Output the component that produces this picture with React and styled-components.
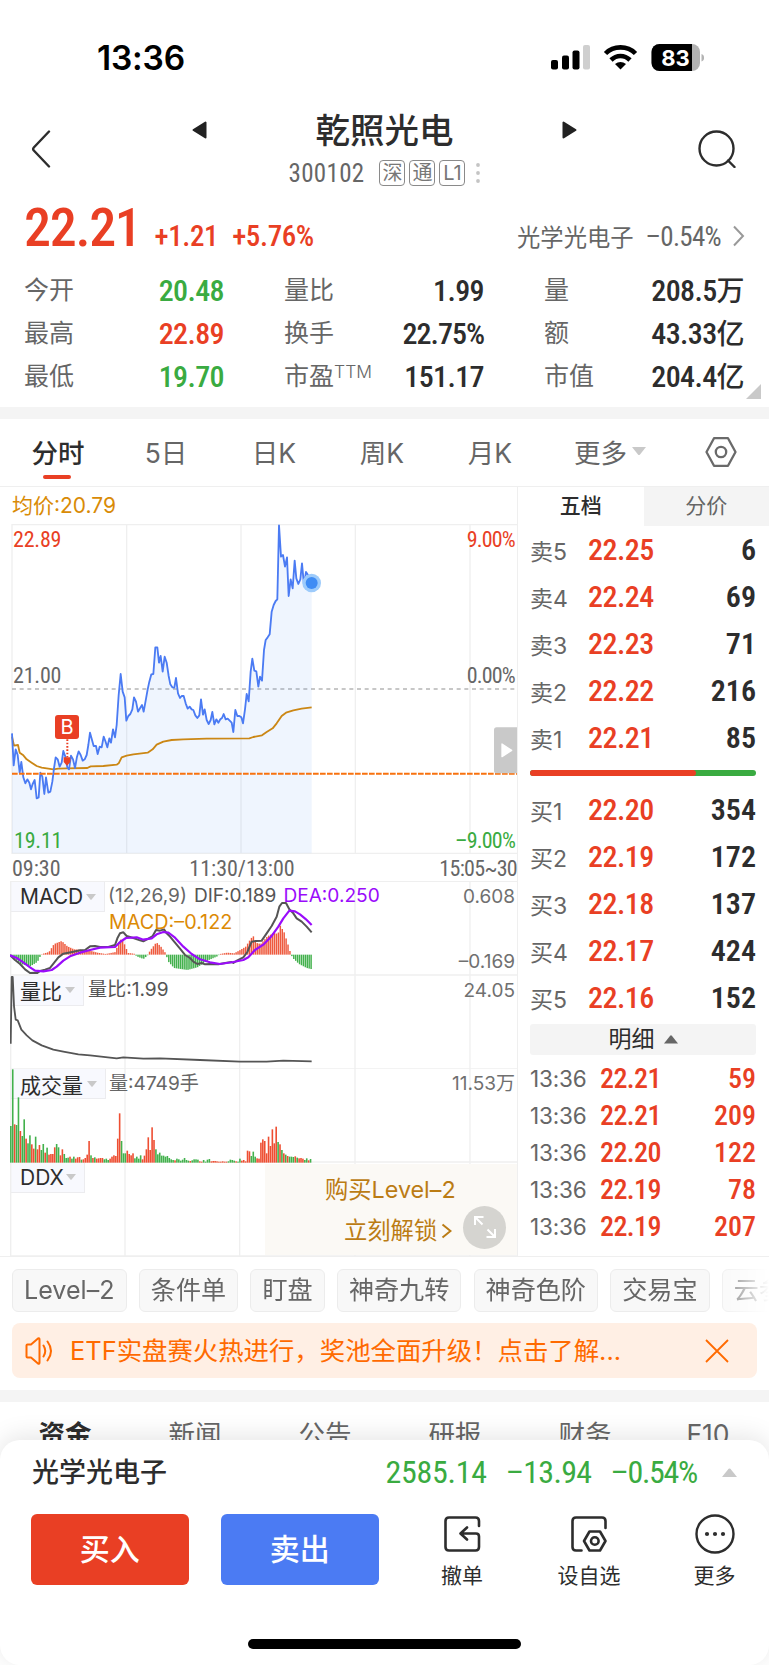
import styled, { createGlobalStyle } from "styled-components";

const RED = "#e93f24";
const GREEN = "#3aab41";
const BLUE = "#4b7bf3";
const DARK = "#2d2d2d";
const GREY = "#666666";
const LINE = "#efefef";
const TEXT_FONT = `Inter, "Noto Sans CJK SC", sans-serif`;
const NUM_FONT = `"Roboto Condensed", Roboto, "Noto Sans CJK SC", sans-serif`;

const stats = [
  { label: "今开", value: "20.48", color: GREEN },
  { label: "量比", value: "1.99" },
  { label: "量", value: "208.5", unit: "万" },
  { label: "最高", value: "22.89", color: RED },
  { label: "换手", value: "22.75%" },
  { label: "额", value: "43.33", unit: "亿" },
  { label: "最低", value: "19.70", color: GREEN },
  { label: "市盈", sup: "TTM", value: "151.17" },
  { label: "市值", value: "204.4", unit: "亿" },
];

const periods = ["分时", "5日", "日K", "周K", "月K"];

const asks = [
  ["卖5", "22.25", "6"],
  ["卖4", "22.24", "69"],
  ["卖3", "22.23", "71"],
  ["卖2", "22.22", "216"],
  ["卖1", "22.21", "85"],
];

const bids = [
  ["买1", "22.20", "354"],
  ["买2", "22.19", "172"],
  ["买3", "22.18", "137"],
  ["买4", "22.17", "424"],
  ["买5", "22.16", "152"],
];

const ticks = [
  ["13:36", "22.21", "59"],
  ["13:36", "22.21", "209"],
  ["13:36", "22.20", "122"],
  ["13:36", "22.19", "78"],
  ["13:36", "22.19", "207"],
];

const tools = ["Level–2", "条件单", "盯盘", "神奇九转", "神奇色阶", "交易宝", "云参"];
const infoTabs = ["资金", "新闻", "公告", "研报", "财务", "F10"];

// chart units are a third of a pixel, one minute is about 5.77 units wide
const STEP = 5.77;
const CHART_END = 935;

const priceLine =
  "36,280 41,376 47,328 53,345 59,398 64,366 70,412 76,430 82,418 88,428 93,448 98,432 104,420 110,475 116,472 121,398 127,410 133,462 138,412 145,458 151,455 157,425 162,385 167,352 173,358 179,380 185,368 190,333 196,350 202,382 207,388 213,347 219,358 225,384 231,350 236,334 242,345 248,362 254,358 260,345 265,315 270,278 276,300 281,318 288,318 293,342 299,320 305,322 311,290 316,303 322,322 328,295 333,308 339,268 345,292 350,255 356,165 362,102 368,155 374,172 379,242 385,228 391,222 397,208 402,172 408,185 414,215 420,205 426,195 431,215 437,182 443,148 448,125 454,103 460,102 466,22 472,22 477,68 482,48 488,95 494,50 500,68 506,108 511,133 517,142 523,143 528,114 534,160 540,174 545,168 551,168 557,190 563,206 569,200 575,208 580,210 586,226 592,234 598,226 603,178 609,224 614,208 620,240 626,252 632,240 637,216 643,253 649,238 655,248 661,238 666,234 671,222 677,238 683,236 689,242 695,248 700,276 706,210 712,228 718,228 724,232 729,250 735,208 740,162 746,184 752,95 757,56 763,92 769,94 775,140 780,110 786,122 792,30 797,0 803,-8 809,-17 815,-85 821,-105 827,-117 832,-122 837,-344 843,-250 849,-255 855,-220 861,-248 866,-132 872,-182 878,-155 884,-238 889,-185 895,-168 901,-182 906,-230 912,-164 918,-204 924,-195 929,-178 935,-170";
const avgLine =
  "36,290 42,317 54,315 59,338 70,346 80,358 95,368 110,378 125,383 145,386 160,388 175,386 200,385 262,384 272,379 310,378 350,374 356,370 365,352 380,347 400,343 443,338 458,328 470,314 490,305 515,300 550,298 620,296 748,295 760,291 786,286 800,276 818,265 830,250 845,228 858,218 880,211 905,206 935,202";
const difLine =
  "30,255 45,270 60,282 75,298 90,309 105,308 112,309 120,303 135,299 150,294 162,279 175,262 190,251 205,248 220,245 240,241 255,240 270,229 285,228 300,231 325,231 345,225 352,205 360,190 370,187 380,198 400,204 420,211 430,214 445,206 458,198 468,180 480,182 492,178 500,190 510,200 525,218 540,236 555,255 570,264 580,275 592,282 605,279 615,283 630,282 655,283 680,278 695,276 700,279 712,271 730,262 742,246 755,215 768,213 785,212 800,190 815,168 830,140 838,110 846,99 858,99 868,118 880,130 890,145 905,155 920,170 935,187";
const deaLine =
  "30,256 50,264 70,277 90,292 105,302 130,304 155,300 170,290 190,272 210,259 240,248 270,240 300,233 345,231 360,216 378,204 410,202 430,209 455,205 470,193 490,186 505,188 525,203 550,230 575,252 600,268 630,277 660,282 700,276 730,270 745,262 765,240 790,224 815,198 835,170 850,145 868,122 885,124 900,133 918,148 935,165";
const ratioLine =
  "32,520 35,320 38,320 42,408 47,448 53,450 64,478 80,495 97,510 125,525 160,538 190,544 235,552 270,555 350,564 370,561 430,565 480,564 600,569 720,574 800,574 850,571 935,573";

const macdShape = [
  [30, 0], [45, -14], [60, -28], [88, -35], [110, -22], [118, -6], [124, 2], [145, 8], [160, 32], [183, 41],
  [200, 25], [220, 16], [250, 14], [268, 12], [290, 6], [315, 2], [345, 8], [352, 34], [362, 48], [372, 30],
  [382, 5], [400, 3], [408, -5], [428, -13], [440, -3], [448, 12], [467, 37], [480, 25], [495, 4], [502, -20],
  [520, -40], [560, -46], [590, -38], [620, -18], [650, -5], [658, 2], [680, 6], [700, 4], [715, 12], [735, 24],
  [745, 40], [757, 57], [768, 35], [780, 32], [800, 55], [820, 65], [832, 62], [838, 88], [850, 68], [862, 30],
  [870, 3], [876, -10], [895, -28], [918, -40], [935, -44],
];

// negative values are falling minutes
const volumes = [
  -110, -280, 115, -113, -196, 95, -80, -130, 72, -58, -82, 55, 42, -78, 40, 53, -38, -56, 30, -45, 24, 26, 26, 46,
  -56, -46, 22, 40, -26, -14, -15, 18, -12, -18, 12, 16, 17, -9, 10, 14, 24, 65, -22, 14, -16, 12, 13, 14, 14, -10,
  -12, -8, 12, 18, 22, 20, 72, 148, -65, -28, -28, 36, 26, 22, 28, -13, -18, -12, -22, 10, 21, 40, 76, 38, 106, 68,
  -40, -25, -30, -21, -21, -18, -20, -14, -10, -8, 7, -12, -10, -6, -9, -14, -8, -6, 5, -7, -10, -10, -9, 4, 3, -8,
  -3, -9, -11, 4, 5, 5, 4, 3, 3, 4, 3, 3, -4, -9, -8, -6, 4, -3, -12, 6, 8, 4, 36, 34, -20, -33, -18, 13, 12, 60,
  70, 65, 28, 78, 50, 100, 58, 108, -62, 55, -38, 28, -24, 20, -18, -18, -17, 19, -15, 13, 14, 12, -8, -13, 7, -11,
];
const VOLUME_STEP = (CHART_END - 30) / volumes.length;

function macdAt(x) {
  const i = macdShape.findIndex((p) => p[0] >= x);
  if (i < 1) return i === 0 ? 0 : -44;
  const [x0, y0] = macdShape[i - 1];
  const [x1, y1] = macdShape[i];
  return y0 + ((y1 - y0) * (x - x0)) / (x1 - x0);
}

function PriceChart() {
  return (
    <ChartSvg viewBox="30 -348 1521 990" width="507" height="330">
      <g stroke={LINE} strokeWidth="4">
        <path d="M36-348V642M380-348V642M723-348V642M1066-348V642M1410-348V642" />
        <path d="M36-346H1551M36 640H1551" />
      </g>
      <path d="M36 147H1551" stroke="#b5b5b5" strokeWidth="4" strokeDasharray="12 11" />
      <polygon points={`${priceLine} 935,640 36,640`} fill="#4b93f3" fillOpacity="0.09" />
      <polyline points={avgLine} fill="none" stroke="#cb8715" strokeWidth="5.5" strokeLinejoin="round" />
      <polyline points={priceLine} fill="none" stroke={BLUE} strokeWidth="5.5" strokeLinejoin="round" />
      <path d="M36 401H1551" stroke="#f8720f" strokeWidth="6" strokeDasharray="17 4" />
      <circle cx="935" cy="-171" r="28" fill="#9dcbfb" />
      <circle cx="935" cy="-171" r="18" fill="#3f8cf4" />
      <path d="M202 298V352" stroke={RED} strokeWidth="6" strokeDasharray="5 5" />
      <path d="M191 352H211V366L201 377L191 366Z" fill={RED} />
      <path d="M1551 262H1490Q1482 262 1482 270V392Q1482 400 1490 400H1551Z" fill="#c9c9c9" />
      <path d="M1506 312L1535 331L1506 350Z" fill="#fff" stroke="#fff" strokeWidth="4" strokeLinejoin="round" />
    </ChartSvg>
  );
}

function PanelGrid({ top }) {
  return (
    <g stroke={LINE} strokeWidth="4">
      {[32, 375, 719, 1065, 1410].map((x) => (
        <path key={x} d={`M${x} ${top}v281`} />
      ))}
      <path d={`M30 ${top + 279}H1551`} />
    </g>
  );
}

function MacdChart() {
  const bars = [];
  for (let x = 31; x < CHART_END - 2; x += STEP) bars.push([x, macdAt(x)]);
  return (
    <ChartSvg viewBox="30 36 1521 281" width="507" height="93.67">
      <PanelGrid top={36} />
      {bars.map(([x, h]) => (
        <rect key={x} x={x} y={h > 0 ? 254 - h : 254} width="4.4" height={Math.abs(h)} fill={h > 0 ? "#ee5a3e" : "#42b14c"} />
      ))}
      <polyline points={difLine} fill="none" stroke="#555" strokeWidth="6" strokeLinejoin="round" />
      <polyline points={deaLine} fill="none" stroke="#9a0cfb" strokeWidth="6.5" strokeLinejoin="round" />
    </ChartSvg>
  );
}

function RatioChart() {
  return (
    <ChartSvg viewBox="30 317 1521 281" width="507" height="93.67">
      <PanelGrid top={317} />
      <polyline points={ratioLine} fill="none" stroke="#555" strokeWidth="5.5" strokeLinejoin="round" />
    </ChartSvg>
  );
}

function VolumeChart() {
  return (
    <ChartSvg viewBox="30 12 1521 281" width="507" height="93.67">
      <PanelGrid top={12} />
      {volumes.map((v, i) => (
        <rect key={i} x={30 + i * VOLUME_STEP} y={293 - Math.abs(v)} width="4.8" height={Math.abs(v)} fill={v > 0 ? "#ee4e32" : "#42b14c"} />
      ))}
    </ChartSvg>
  );
}

function Caret({ color = "#c9c9c9", up, size = 10 }) {
  return (
    <svg width={size} height={size * 0.6} viewBox="0 0 10 6">
      <path d={up ? "M0 6L4.4.5Q5 0 5.6.5L10 6Z" : "M0 0H10L5.6 5.5Q5 6 4.4 5.5Z"} fill={color} />
    </svg>
  );
}

function StatusIcons() {
  return (
    <svg width="154" height="28" viewBox="550 44 154 28">
      <rect x="551" y="60" width="7" height="9.5" rx="2" />
      <rect x="562" y="55.5" width="7" height="14" rx="2" />
      <rect x="572.5" y="50.5" width="7" height="19" rx="2" />
      <rect x="583" y="45" width="7" height="24.5" rx="2" fill="#cfcfcf" />
      <g fill="none" stroke="#000" strokeWidth="4.6">
        <path d="M605.5 53.5C613.5 45.3 627.5 45.3 635.5 53.5" />
        <path d="M611 60C616.5 54.6 624.5 54.6 630 60" />
      </g>
      <path d="M615 64C618.5 61.2 622.5 61.2 626 64L620.5 69.5Z" />
      <clipPath id="charge">
        <rect x="651.5" y="44" width="48.5" height="27" rx="8" />
      </clipPath>
      <g clipPath="url(#charge)">
        <rect x="651" y="44" width="49" height="27" fill="#b3b3b3" />
        <rect x="651" y="44" width="41" height="27" />
      </g>
      <path d="M701.5 54C705 55 705 60.5 701.5 61.5Z" fill="#b3b3b3" />
      <text x="675.5" y="65.5" textAnchor="middle" fontFamily="Inter" fontSize="22" fontWeight="700" fill="#fff">83</text>
    </svg>
  );
}

function Book({ rows }) {
  return rows.map(([name, price, qty]) => (
    <BookRow key={name}>
      <span>{name}</span>
      <Num $size={30} $weight={500} $color={RED} $space={-0.5}>{price}</Num>
      <Num $size={30} $weight={600} $color={DARK}>{qty}</Num>
    </BookRow>
  ));
}

export default function App() {
  return (
    <Screen>
      <GlobalStyle />
      <StatusBar>
        <span>13:36</span>
        <StatusIcons />
      </StatusBar>

      <Header>
        <svg width="20" height="38" viewBox="0 0 20 38">
          <path d="M18 1.5L2.8 17.5Q1.5 19 2.8 20.5L18 36.5" fill="none" stroke={DARK} strokeWidth="2.4" strokeLinecap="round" />
        </svg>
        <SwitchArrow viewBox="0 0 15 18">
          <path d="M13.5 1.5V16.5L1.5 9Z" fill="#222" stroke="#222" strokeWidth="2" strokeLinejoin="round" />
        </SwitchArrow>
        <TitleBlock>
          <h1>乾照光电</h1>
          <CodeRow>
            <Num $size={25} $color={GREY} $space={0.3}>300102</Num>
            <Tags>
              <Tag>深</Tag>
              <Tag>通</Tag>
              <Tag>L1</Tag>
            </Tags>
            <svg width="4" height="22" viewBox="0 0 4 22" fill="#c4c4c4">
              <circle cx="2" cy="3" r="1.9" />
              <circle cx="2" cy="11" r="1.9" />
              <circle cx="2" cy="19" r="1.9" />
            </svg>
          </CodeRow>
        </TitleBlock>
        <SwitchArrow viewBox="0 0 15 18">
          <path d="M1.5 1.5V16.5L13.5 9Z" fill="#222" stroke="#222" strokeWidth="2" strokeLinejoin="round" />
        </SwitchArrow>
        <SearchIcon viewBox="0 0 38 38" fill="none" stroke={DARK} strokeWidth="2.4" strokeLinecap="round">
          <circle cx="18.5" cy="18.5" r="17" />
          <path d="M30 30.5L36.5 37" />
        </SearchIcon>
      </Header>

      <Quote>
        <Num $size={54} $weight={500} $color={RED} $space={-1.3}>22.21</Num>
        <Change>
          <Num $size={29} $weight={500} $color={RED} $space={-0.4}>+1.21</Num>
          <Num $size={29} $weight={500} $color={RED} $space={-0.4}>+5.76%</Num>
        </Change>
        <Sector>
          <span>光学光电子</span>
          <Num $size={27} $color={GREY} $space={-0.7}>–0.54%</Num>
          <svg width="13" height="22" viewBox="0 0 13 22">
            <path d="M2 1.5L11 11L2 20.5" fill="none" stroke="#999" strokeWidth="2" />
          </svg>
        </Sector>
      </Quote>

      <Stats>
        {stats.map((s) => (
          <Stat key={s.label}>
            <StatLabel>
              {s.label}
              {s.sup && <sup>{s.sup}</sup>}
            </StatLabel>
            <Num $size={30} $weight={500} $color={s.color || DARK} $space={s.value.endsWith("%") ? -1 : -0.6}>
              {s.value}
              {s.unit && <Unit>{s.unit}</Unit>}
            </Num>
          </Stat>
        ))}
        <Corner />
      </Stats>
      <Band $height={12} />

      <Periods>
        {periods.map((p, i) => (
          <Period key={p} $active={i === 0}>{p}</Period>
        ))}
        <Period $width={132}>
          更多
          <Caret size={14} />
        </Period>
        <Period $width={89}>
          <svg width="32" height="32" viewBox="0 0 32 32" fill="none" stroke="#6a6a6a" strokeWidth="2.3" strokeLinejoin="round">
            <path d="M9 2.2H23L30.5 16L23 29.8H9L1.5 16Z" />
            <circle cx="16" cy="16" r="5.2" />
          </svg>
        </Period>
      </Periods>

      <Market>
        <Charts>
          <AvgPrice>均价:20.79</AvgPrice>
          <PricePanel>
            <PriceChart />
            <Label $x={3} $y={5}><Num $size={22} $color={RED} $space={-0.2}>22.89</Num></Label>
            <Label $right={2} $y={5}><Num $size={22} $color={RED} $space={-0.8}>9.00%</Num></Label>
            <Label $x={3} $y={141}><Num $size={22} $color={GREY} $space={-0.2}>21.00</Num></Label>
            <Label $right={2} $y={141}><Num $size={22} $color={GREY} $space={-0.8}>0.00%</Num></Label>
            <Label $x={4} $y={306}><Num $size={22} $color={GREEN} $space={-0.2}>19.11</Num></Label>
            <Label $right={2} $y={306}><Num $size={22} $color={GREEN} $space={-0.8}>–9.00%</Num></Label>
            <BuyMark>B</BuyMark>
          </PricePanel>
          <TimeAxis>
            <Num $size={22} $color={GREY}>09:30</Num>
            <Num $size={22} $color={GREY}>11:30/13:00</Num>
            <Num $size={22} $color={GREY} $space={-0.7}>15:05~30</Num>
          </TimeAxis>

          <Panel $first>
            <MacdChart />
            <Picker $width={94}>MACD<Caret /></Picker>
            <Label $x={98} $y={0}>
              <Legend>
                <span>(12,26,9)</span>
                <Dif>DIF:0.189</Dif>
                <Dea>DEA:0.250</Dea>
              </Legend>
            </Label>
            <Label $x={99} $y={27}><Legend $color="#dc8a05" $size={19.8}>MACD:–0.122</Legend></Label>
            <Label $right={2} $y={3}><Scale>0.608</Scale></Label>
            <Label $right={2} $y={68}><Scale>–0.169</Scale></Label>
          </Panel>
          <Panel>
            <RatioChart />
            <Picker $width={73}>量比<Caret /></Picker>
            <Label $x={78} $y={0}><Legend $color="#555">量比:1.99</Legend></Label>
            <Label $right={2} $y={3}><Scale>24.05</Scale></Label>
          </Panel>
          <Panel>
            <VolumeChart />
            <Picker $width={95}>成交量<Caret /></Picker>
            <Label $x={99} $y={1}><Legend>量:4749手</Legend></Label>
            <Label $right={2} $y={3}><Scale>11.53万</Scale></Label>
          </Panel>
          <Panel>
            <ChartSvg viewBox="30 293 1521 281" width="507" height="93.67">
              <PanelGrid top={293} />
            </ChartSvg>
            <Picker $width={74}>DDX<Caret /></Picker>
            <Unlock>
              <span>购买Level–2</span>
              <UnlockLine>
                立刻解锁
                <svg width="11" height="16" viewBox="0 0 11 16">
                  <path d="M1.5 1.5L9.5 8L1.5 14.5" fill="none" stroke="#bb7c14" strokeWidth="2" />
                </svg>
              </UnlockLine>
              <Expand>
                <svg width="24" height="24" viewBox="0 0 24 24" fill="none" stroke="#fff" strokeWidth="2">
                  <path d="M2 10V2H10.5M2 2L9.5 9.5M22 14V22H13.5M22 22L14.5 14.5" />
                </svg>
              </Expand>
            </Unlock>
          </Panel>
        </Charts>

        <Side>
          <SideTabs>
            <SideTab $active>五档</SideTab>
            <SideTab>分价</SideTab>
          </SideTabs>
          <SideBody>
            <Book rows={asks} />
            <Ratio><i /></Ratio>
            <Book rows={bids} />
            <DetailHead>
              明细
              <Caret up color="#666" size={14} />
            </DetailHead>
            {ticks.map(([time, price, qty], i) => (
              <TickRow key={i}>
                <span>{time}</span>
                <Num $size={28} $weight={500} $color={RED} $space={-0.6}>{price}</Num>
                <Num $size={28} $weight={500} $color={RED}>{qty}</Num>
              </TickRow>
            ))}
          </SideBody>
        </Side>
      </Market>

      <Tools>
        {tools.map((t) => (
          <Tool key={t}>{t}</Tool>
        ))}
      </Tools>

      <Notice>
        <svg width="28" height="28" viewBox="0 0 28 28" fill="none" stroke="#ff6a00" strokeWidth="2" strokeLinecap="round" strokeLinejoin="round">
          <path d="M1.5 8.5Q1.5 7.5 2.5 7.5H6L13 1.5Q14.5 .8 14.5 2.5V25.5Q14.5 27.2 13 26.5L6 20.5H2.5Q1.5 20.5 1.5 19.5Z" />
          <path d="M18.5 8.5Q22 14 18.5 19.5M22.5 4.5Q29.5 14 22.5 23.5" />
        </svg>
        <p>ETF实盘赛火热进行，奖池全面升级！点击了解...</p>
        <svg width="24" height="24" viewBox="0 0 24 24">
          <path d="M1 1L23 23M23 1L1 23" stroke="#ff6a00" strokeWidth="1.8" />
        </svg>
      </Notice>
      <Band $height={12} />

      <InfoTabs>
        {infoTabs.map((t, i) => (
          <InfoTab key={t} $active={i === 0}>{t}</InfoTab>
        ))}
      </InfoTabs>

      <Sheet>
        <IndexRow>
          <h2>光学光电子</h2>
          <Num $size={32} $color={GREEN} $space={-0.3}>2585.14</Num>
          <Num $size={32} $color={GREEN} $space={-0.7}>–13.94</Num>
          <Num $size={32} $color={GREEN} $space={-1.3}>–0.54%</Num>
          <IndexToggle><Caret up size={15} /></IndexToggle>
        </IndexRow>
        <Actions>
          <TradeButton $color={RED}>买入</TradeButton>
          <TradeButton $color={BLUE}>卖出</TradeButton>
          <Action $width={102}>
            <svg width="40" height="40" viewBox="0 0 40 40" fill="none" stroke={DARK} strokeWidth="2.6" strokeLinecap="round" strokeLinejoin="round">
              <path d="M37 12V7Q37 3.5 33.5 3.5H7Q3.5 3.5 3.5 7V33Q3.5 36.5 7 36.5H33.5Q37 36.5 37 33V22.5Q37 19.5 34 19.5H19M25 13.5L18.5 19.5L25 25.5" />
            </svg>
            撤单
          </Action>
          <Action $width={152}>
            <svg width="40" height="40" viewBox="0 0 40 40" fill="none" stroke={DARK} strokeWidth="2.6" strokeLinecap="round" strokeLinejoin="round">
              <path d="M36.5 14V7Q36.5 3.5 33 3.5H7Q3.5 3.5 3.5 7V33Q3.5 36.5 7 36.5H12.5" />
              <path d="M20.5 17.5H31L36.5 27L31 36.5H20.5L15 27Z" />
              <circle cx="25.8" cy="27" r="3.8" />
            </svg>
            设自选
          </Action>
          <Action $width={99}>
            <svg width="40" height="40" viewBox="0 0 40 40" fill="none" stroke={DARK} strokeWidth="2.4">
              <circle cx="20" cy="20" r="18.5" />
              <g fill={DARK} stroke="none">
                <circle cx="12" cy="20" r="2.1" />
                <circle cx="20" cy="20" r="2.1" />
                <circle cx="28" cy="20" r="2.1" />
              </g>
            </svg>
            更多
          </Action>
        </Actions>
        <HomeBar />
      </Sheet>
    </Screen>
  );
}

const GlobalStyle = createGlobalStyle`
  * { box-sizing: border-box; }
  body { margin: 0; background: #fff; overflow: hidden; }
  h1, h2, p { margin: 0; }
  svg { display: block; flex-shrink: 0; }
`;

const Screen = styled.div`
  position: relative;
  display: flex;
  flex-direction: column;
  width: 769px;
  height: 1665px;
  overflow: hidden;
  background: #fff;
  font-family: ${TEXT_FONT};
  color: ${GREY};
  white-space: nowrap;
`;

const Num = styled.span`
  font-family: ${NUM_FONT};
  font-size: ${(p) => p.$size}px;
  font-weight: ${(p) => p.$weight || 400};
  letter-spacing: ${(p) => p.$space || 0}px;
  line-height: 1;
  color: ${(p) => p.$color};
`;

const StatusBar = styled.div`
  display: flex;
  flex-shrink: 0;
  justify-content: space-between;
  align-items: center;
  height: 115px;
  padding: 0 65px 0 97px;
  span {
    padding-top: 1px;
    font-size: 33.5px;
    font-weight: 600;
    color: #000;
    letter-spacing: -0.2px;
  }
`;

const Header = styled.div`
  display: grid;
  grid-template-columns: 161px 15px 355px 15px 1fr;
  align-items: center;
  height: 83px;
  margin-top: -3px;
  padding: 0 33px 9px 31px;
`;

const SwitchArrow = styled.svg`
  width: 15px;
  height: 18px;
  margin: 0 0 38px;
`;

const SearchIcon = styled.svg`
  justify-self: end;
  width: 38px;
  height: 38px;
`;

const TitleBlock = styled.div`
  display: flex;
  flex-direction: column;
  align-items: center;
  gap: 10px;
  h1 {
    font-size: 34.5px;
    line-height: 38px;
    font-weight: 500;
    color: ${DARK};
  }
`;

const CodeRow = styled.div`
  display: flex;
  align-items: center;
  height: 26px;
  gap: 11px;
`;

const Tags = styled.div`
  display: flex;
  gap: 4px;
  margin-left: 4px;
`;

const Tag = styled.span`
  display: flex;
  align-items: center;
  justify-content: center;
  width: 26px;
  height: 26px;
  border: 1.5px solid #8a8a8a;
  border-radius: 4px;
  font-size: 20px;
  line-height: 1;
  color: #777;
`;

const Quote = styled.div`
  display: flex;
  align-items: baseline;
  height: 72px;
  padding: 6px 24px 0 24px;
`;

const Change = styled.div`
  display: flex;
  gap: 14px;
  margin-left: 14px;
`;

const Sector = styled.div`
  display: flex;
  align-items: baseline;
  gap: 12px;
  margin-left: auto;
  font-size: 23.3px;
  svg {
    align-self: center;
    margin-left: -1px;
  }
`;

const Stats = styled.div`
  position: relative;
  display: grid;
  grid-template-columns: repeat(3, 200px);
  grid-auto-rows: 43px;
  justify-content: space-between;
  height: 140px;
  padding: 2px 25px 0 24px;
`;

const Stat = styled.div`
  display: flex;
  justify-content: space-between;
  align-items: center;
`;

const StatLabel = styled.span`
  font-size: 25px;
  line-height: 1;
  sup {
    font-size: 17.5px;
    font-weight: 300;
    line-height: 0;
    vertical-align: 7px;
  }
`;

const Unit = styled.span`
  font-size: 28px;
`;

const Corner = styled.i`
  position: absolute;
  right: 8px;
  bottom: 8px;
  border-left: 15px solid transparent;
  border-bottom: 15px solid #c9c9c9;
`;

const Band = styled.div`
  flex-shrink: 0;
  height: ${(p) => p.$height}px;
  background: #f4f4f4;
`;

const Periods = styled.div`
  display: flex;
  height: 68px;
  padding-left: 4px;
  border-bottom: 1px solid ${LINE};
`;

const Period = styled.div`
  position: relative;
  display: flex;
  align-items: center;
  justify-content: center;
  gap: 5px;
  width: ${(p) => p.$width || 108}px;
  height: 68px;
  padding-bottom: 3px;
  font-size: 26.5px;
  color: ${(p) => (p.$active ? DARK : GREY)};
  font-weight: ${(p) => (p.$active ? 500 : 400)};
  &::after {
    content: "";
    display: ${(p) => (p.$active ? "block" : "none")};
    position: absolute;
    left: 39px;
    bottom: 8px;
    width: 28px;
    height: 4px;
    border-radius: 2px;
    background: ${RED};
  }
`;

const Market = styled.div`
  display: flex;
  height: 770px;
  border-bottom: 1px solid ${LINE};
`;

const Charts = styled.div`
  width: 518px;
  padding-left: 10px;
  border-right: 1px solid ${LINE};
`;

const ChartSvg = styled.svg`
  position: relative;
  z-index: 1;
  display: block;
`;

const AvgPrice = styled.div`
  height: 37px;
  padding-left: 2px;
  font-size: 21px;
  line-height: 37px;
  color: #d98b06;
`;

const PricePanel = styled.div`
  position: relative;
  height: 330px;
`;

/* readings printed over a chart */
const Label = styled.div`
  position: absolute;
  z-index: 2;
  top: ${(p) => p.$y}px;
  ${(p) => (p.$right !== undefined ? `right: ${p.$right}px;` : `left: ${p.$x}px;`)}
  display: flex;
`;

const BuyMark = styled.div`
  position: absolute;
  left: 45px;
  top: 191px;
  z-index: 1;
  width: 24px;
  height: 24px;
  border-radius: 3px;
  background: ${RED};
  color: #fff;
  font-size: 20px;
  line-height: 24px;
  text-align: center;
`;

const TimeAxis = styled.div`
  display: flex;
  justify-content: space-between;
  height: 28px;
  padding: 4px 0 0 2px;
  & > :nth-child(2) {
    margin-right: 16px;
  }
`;

const Panel = styled.div`
  position: relative;
  height: 93.67px;
  box-shadow: ${(p) => (p.$first ? `0 -1px 0 ${LINE}` : "none")};
`;

const Picker = styled.div`
  position: absolute;
  left: 1px;
  top: 0;
  display: flex;
  align-items: center;
  justify-content: space-between;
  width: ${(p) => p.$width}px;
  height: 30px;
  padding: 0 8px 0 9px;
  border: solid #ececef;
  border-width: 0 1px 1px 0;
  background: #f8f9fe;
  font-size: 21px;
  color: ${DARK};
`;

const Legend = styled.div`
  display: flex;
  gap: 7px;
  font-size: ${(p) => p.$size || 19.1}px;
  line-height: 26px;
  color: ${(p) => p.$color || GREY};
`;

const Dif = styled.span`
  color: #555;
`;

const Dea = styled.span`
  color: #9a0cfb;
`;

const Scale = styled.span`
  font-size: 19px;
  line-height: 24px;
  color: #707070;
`;

const Unlock = styled.div`
  position: absolute;
  right: 0;
  top: 1px;
  z-index: 2;
  width: 252px;
  height: 91px;
  padding: 9px 0 0 60px;
  background: #fbf9f5;
  font-size: 23.3px;
  line-height: 34px;
  color: #bb7c14;
`;

const UnlockLine = styled.div`
  display: flex;
  align-items: center;
  gap: 4px;
  padding: 7px 0 0 19px;
`;

const Expand = styled.div`
  position: absolute;
  right: 11px;
  bottom: 6px;
  display: flex;
  align-items: center;
  justify-content: center;
  width: 43px;
  height: 43px;
  border-radius: 50%;
  background: #d5d4d0;
`;

const Side = styled.div`
  flex: 1;
`;

const SideTabs = styled.div`
  display: flex;
  height: 39px;
`;

const SideTab = styled.div`
  flex: 1;
  font-size: 21px;
  line-height: 38px;
  text-align: center;
  color: ${(p) => (p.$active ? DARK : GREY)};
  font-weight: ${(p) => (p.$active ? 500 : 400)};
  background: ${(p) => (p.$active ? "#fff" : "#f4f4f4")};
`;

const SideBody = styled.div`
  padding: 0 13px 0 12px;
`;

const BookRow = styled.div`
  display: grid;
  grid-template-columns: 58px 80px 1fr;
  align-items: center;
  height: 47px;
  font-size: 23px;
  & > :last-child {
    text-align: right;
  }
`;

const Ratio = styled.div`
  height: 6px;
  margin: 9px 0 10px;
  border-radius: 3px;
  background: ${GREEN};
  i {
    display: block;
    width: 73.3%;
    height: 6px;
    border-radius: 3px;
    background: ${RED};
  }
`;

const DetailHead = styled.div`
  display: flex;
  align-items: center;
  justify-content: center;
  gap: 9px;
  height: 31px;
  margin: 3px 0 5px;
  border-radius: 3px;
  background: #f4f4f4;
  font-size: 23px;
  line-height: 29px;
  color: ${DARK};
`;

const TickRow = styled.div`
  display: grid;
  grid-template-columns: 70px 80px 1fr;
  align-items: center;
  height: 37px;
  font-size: 22.5px;
  & > :first-child {
    letter-spacing: -0.2px;
  }
  & > :last-child {
    text-align: right;
  }
`;

const Tools = styled.div`
  display: flex;
  gap: 12.3px;
  height: 67px;
  padding: 12px 0 0 12px;
  overflow: hidden;
  mask-image: linear-gradient(90deg, #000 710px, transparent 769px);
`;

const Tool = styled.div`
  flex-shrink: 0;
  height: 43px;
  padding: 0 11px;
  border: 1px solid #ececec;
  border-radius: 6px;
  background: #f8f8f8;
  font-size: 25.1px;
  line-height: 40px;
`;

const Notice = styled.div`
  display: flex;
  align-items: center;
  flex-shrink: 0;
  height: 55px;
  margin: -1px 12px 12px;
  padding: 0 28px 0 13px;
  border-radius: 8px;
  background: #ffefe4;
  color: #ff6a00;
  p {
    flex: 1;
    margin-left: 17px;
    padding-bottom: 4px;
    font-size: 25.4px;
  }
`;

const InfoTabs = styled.div`
  display: flex;
  padding-top: 12px;
`;

const InfoTab = styled.div`
  flex-shrink: 0;
  width: 130px;
  font-size: 26.5px;
  line-height: 40px;
  text-align: center;
  color: ${(p) => (p.$active ? DARK : GREY)};
  font-weight: ${(p) => (p.$active ? 700 : 400)};
  &:last-child {
    width: 116px;
  }
`;

const Sheet = styled.div`
  position: absolute;
  left: 0;
  bottom: 0;
  width: 769px;
  height: 225px;
  border-radius: 20px;
  background: #fff;
  box-shadow: 0 -4px 24px rgba(0, 0, 0, 0.1);
`;

const IndexRow = styled.div`
  display: flex;
  align-items: center;
  gap: 19px;
  height: 64px;
  padding: 0 32px;
  h2 {
    flex: 1;
    padding-bottom: 3px;
    font-size: 27px;
    font-weight: 500;
    color: ${DARK};
  }
`;

const IndexToggle = styled.div`
  margin-left: 6px;
`;

const Actions = styled.div`
  display: flex;
  padding: 10px 0 0 31px;
`;

const TradeButton = styled.div`
  width: 157.5px;
  height: 71px;
  margin-right: 32.5px;
  border-radius: 6px;
  background: ${(p) => p.$color};
  font-size: 30px;
  font-weight: 500;
  line-height: 71px;
  text-align: center;
  color: #fff;
`;

const Action = styled.div`
  display: flex;
  flex-direction: column;
  align-items: center;
  gap: 7px;
  width: ${(p) => p.$width}px;
  font-size: 21px;
  line-height: 30px;
  color: ${DARK};
`;

const HomeBar = styled.div`
  width: 273px;
  height: 10px;
  margin: 48px auto 0;
  border-radius: 5px;
  background: #000;
`;
